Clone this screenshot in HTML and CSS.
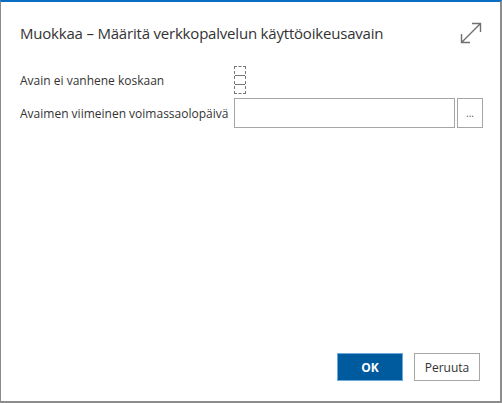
FILE: index.html
```html
<!DOCTYPE html>
<html lang="fi">
<head>
<meta charset="utf-8">
<link rel="stylesheet" href="styles.css">
</head>
<body>
<div class="dialog">
  <div class="header">
    <h1 class="title">Muokkaa – Määritä verkkopalvelun käyttöoikeusavain</h1>
    <svg class="expand" width="22" height="22" viewBox="0 0 22 22">
      <path d="M1.5 20.5 L20.5 1.5 M12 1.5 H20.5 V10 M1.5 12 V20.5 H10" fill="none" stroke="#707070" stroke-width="1.4"/>
    </svg>
  </div>
  <div class="form">
    <div class="row">
      <label class="label">Avain ei vanhene koskaan</label>
      <div class="check"><span></span><span></span><span></span></div>
    </div>
    <div class="row">
      <label class="label">Avaimen viimeinen voimassaolopäivä</label>
      <div class="field">
        <input class="input" type="text">
        <button class="dots">...</button>
      </div>
    </div>
  </div>
  <div class="footer">
    <button class="btn primary">OK</button>
    <button class="btn">Peruuta</button>
  </div>
</div>
</body>
</html>
```
FILE: styles.css
```css
html, body {
  margin: 0;
  padding: 0;
  background: #ffffff;
}
body {
  font-family: "Open Sans", "Noto Sans", sans-serif;
  color: #333;
}
.dialog {
  box-sizing: border-box;
  width: 502px;
  height: 403px;
  border-left: 1px solid #8c8c8c;
  border-right: 2px solid #8c8c8c;
  border-bottom: 2px solid #8c8c8c;
  border-top: 2px solid #0a6fc2;
  display: flex;
  flex-direction: column;
  background: #fff;
}
.header {
  display: flex;
  align-items: flex-start;
  justify-content: space-between;
  padding: 20px 18px 0 19px;
}
.title {
  margin: 0;
  font-weight: 400;
  font-size: 15px;
  line-height: 22px;
  color: #333;
  letter-spacing: -0.2px;
}
.expand {
  margin-top: 0;
}
.form {
  padding: 22px 0 0 19px;
  display: flex;
  flex-direction: column;
  gap: 4px;
}
.row {
  display: flex;
  align-items: center;
}
.label {
  width: 214px;
  font-size: 12px;
  color: #333;
}
.check {
  width: 10px;
  height: 26px;
  border: 1px dashed #777;
  display: flex;
  flex-direction: column;
}
.check span {
  flex: 1;
  border-top: 1px solid #777;
}
.check span:first-child {
  border-top: none;
}
.field {
  display: flex;
  gap: 2px;
}
.input {
  box-sizing: border-box;
  width: 221px;
  height: 30px;
  border: 1px solid #a6a6a6;
  margin: 0;
  padding: 0 4px;
  outline: none;
}
.dots {
  box-sizing: border-box;
  width: 26px;
  height: 30px;
  border: 1px solid #a6a6a6;
  background: #fff;
  margin: 0;
  padding: 0;
  font-size: 10px;
  color: #555;
  font-family: "Open Sans", sans-serif;
}
.footer {
  margin-top: auto;
  display: flex;
  justify-content: flex-end;
  gap: 11px;
  padding: 0 20px 20px 0;
}
.btn {
  box-sizing: border-box;
  width: 66px;
  height: 28px;
  border: 1px solid #a6a6a6;
  background: #fff;
  font-family: "Open Sans", "Noto Sans", sans-serif;
  font-size: 12px;
  color: #333;
  padding: 0;
}
.btn.primary {
  background: #005a9e;
  border-color: #6aa9dc;
  color: #fff;
  font-weight: 700;
}
```
